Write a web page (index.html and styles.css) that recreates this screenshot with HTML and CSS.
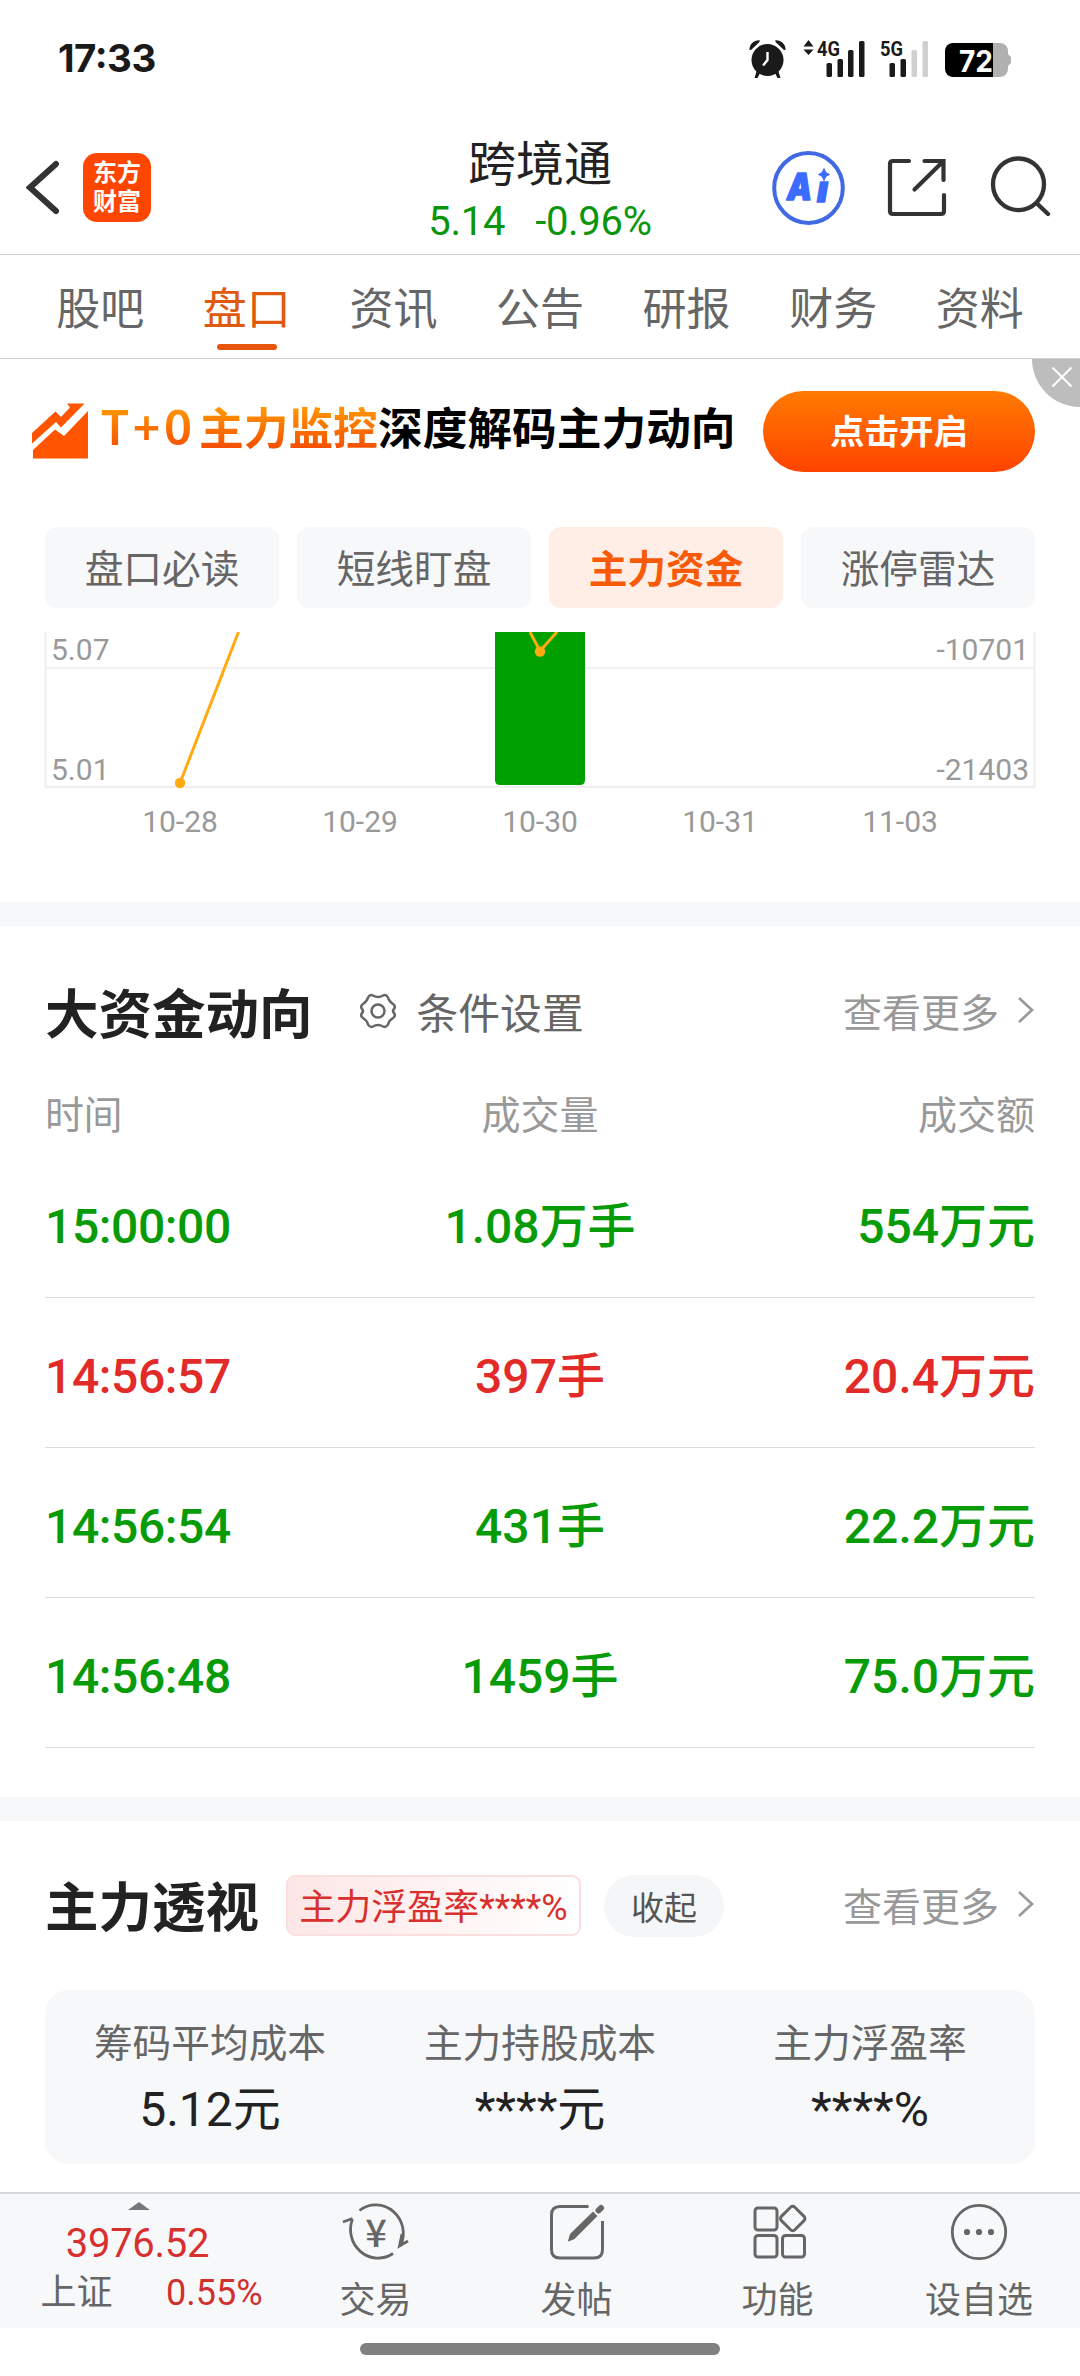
FILE: index.html
```html
<!DOCTYPE html>
<html lang="zh-CN">
<head>
<meta charset="utf-8">
<title>跨境通</title>
<link rel="stylesheet" href="styles.css">
</head>
<body>
<div class="status">
  <span class="clock">17:33</span>
  <svg class="status-icons" width="266" height="44" viewBox="747 37 266 44">
    <g fill="#1a1a1a">
      <circle cx="767.500" cy="61" r="16"/>
      <path d="M749.500 51a9 9 0 0 1 10.500-9.500l-1 2-8 7.500zM785.500 51a9 9 0 0 0-10.500-9.500l1 2 8 7.500z"/>
      <path d="M757 71l-2.500 8h3l3.500-7zM778 71l2.500 8h-3l-3.500-7z"/>
      <path d="M803.500 47.500l5-6.500 5 6.500zM803.500 50.500l5 5.500 5-5.500z"/>
      <rect x="826.500" y="64" width="5.500" height="14" rx="1.500"/>
      <rect x="837.500" y="60" width="5.500" height="18" rx="1.500"/>
      <rect x="848" y="51" width="5.500" height="27" rx="1.500"/>
      <rect x="859" y="42" width="5.500" height="36" rx="1.500"/>
      <rect x="889.500" y="64" width="5.500" height="14" rx="1.500"/>
      <rect x="900.500" y="60" width="5.500" height="18" rx="1.500"/>
    </g>
    <path d="M767.500 53v8l-4.500 5.500" fill="none" stroke="#fff" stroke-width="2.400"/>
    <rect x="911.500" y="51" width="5.500" height="27" rx="1.500" fill="#d0d0d0"/>
    <rect x="922.500" y="42" width="5.500" height="36" rx="1.500" fill="#d0d0d0"/>
    <text class="net" x="817" y="56.500" textLength="23" lengthAdjust="spacingAndGlyphs">4G</text>
    <text class="net" x="880" y="56.500" textLength="23" lengthAdjust="spacingAndGlyphs">5G</text>
    <path d="M992 44h8a8 8 0 0 1 8 8v3l3 3v6l-3 3v3a8 8 0 0 1-8 8h-8z" fill="#b0b0b0"/>
    <path d="M993 44h-40a8 8 0 0 0-8 8v18a8 8 0 0 0 8 8h40z" fill="#000"/>
    <text class="pct" x="959" y="72.500" textLength="34" lengthAdjust="spacingAndGlyphs">72</text>
  </svg>
</div>

<header class="header">
  <div class="head-left">
    <svg width="34" height="56" viewBox="26 160 34 56"><path d="M56 164L30 187.500 56 211" fill="none" stroke="#333" stroke-width="6" stroke-linecap="round"/></svg>
    <div class="logo"><span>东方</span><span>财富</span></div>
  </div>
  <div class="head-mid">
    <div class="name">跨境通</div>
    <div class="quote"><span>5.14</span><span>-0.96%</span></div>
  </div>
  <div class="head-right">
    <svg width="74" height="74" viewBox="772 150 74 74">
      <ellipse cx="808.500" cy="187" rx="34.300" ry="35" fill="none" stroke="#4169e1" stroke-width="4"/>
      <text class="ai" x="787" y="199" textLength="25" lengthAdjust="spacingAndGlyphs">A</text>
      <text class="ai" x="817" y="200.500" textLength="11" lengthAdjust="spacingAndGlyphs">ı</text>
      <path d="M824 167.500q1 5 5.500 6q-4.500 1-5.500 6q-1-5-5.500-6q4.500-1 5.500-6z" fill="#3b6bff" stroke="#3b6bff"/>
    </svg>
    <svg width="62" height="62" viewBox="885 157 62 62" fill="none" stroke="#333" stroke-width="4.200" stroke-linecap="round">
      <path d="M909 161h-16q-3 0-3 3v47q0 3 3 3h48q3 0 3-3v-16M924.500 161h19v19M943 161.500L914.500 189.500"/>
    </svg>
    <svg class="search" width="62" height="66" viewBox="989 155 62 66" fill="none" stroke="#333" stroke-width="4.300" stroke-linecap="round">
      <ellipse cx="1018.500" cy="184.300" rx="25.500" ry="25.800"/><path d="M1037 203.500l11 10.500"/>
    </svg>
  </div>
</header>

<nav class="tabs">
  <span>股吧</span><span class="on">盘口</span><span>资讯</span><span>公告</span><span>研报</span><span>财务</span><span>资料</span>
</nav>

<section class="banner">
  <svg width="58" height="58" viewBox="31 402 58 58" fill="#ff5500">
    <path d="M32 433L55.500 411.500 61 417 70 407.500 67 403.500H84.500L61 427.500 56 422 32 443.500z"/>
    <path d="M33 450L55 429.500 64 436 88 411V458.500H33z"/>
  </svg>
  <p><em><span class="t0">T+0</span>主力监控</em>深度解码主力动向</p>
  <button class="cta">点击开启</button>
  <div class="close"><svg width="22" height="22" viewBox="0 0 22 22"><path d="M1.500 1.500l19 19M20.500 1.500l-19 19" stroke="#fff" stroke-width="2"/></svg></div>
</section>

<div class="chips">
  <span>盘口必读</span><span>短线盯盘</span><span class="on">主力资金</span><span>涨停雷达</span>
</div>

<section class="chart">
  <svg width="1080" height="160" viewBox="0 632 1080 160">
    <path d="M45.500 632V787H1034.500V632" fill="none" stroke="#eee" stroke-width="2"/>
    <path d="M45 668H1035" stroke="#f1f1f1" stroke-width="2"/>
    <path d="M495 632h90v148q0 5-5 5h-80q-5 0-5-5z" fill="#00a000"/>
    <path d="M180 783L238.500 632M530 632l10 19 17-19" fill="none" stroke="#fa1" stroke-width="3"/>
    <circle cx="180" cy="783" r="5.200" fill="#fa1"/><circle cx="540" cy="651.500" r="5.200" fill="#fa1"/>
    <g class="axis">
      <text x="51" y="660">5.07</text><text x="51" y="780">5.01</text>
      <text x="1029" y="660" text-anchor="end">-10701</text><text x="1029" y="780" text-anchor="end">-21403</text>
    </g>
  </svg>
  <div class="dates"><span>10-28</span><span>10-29</span><span>10-30</span><span>10-31</span><span>11-03</span></div>
</section>

<section class="flow">
  <div class="section-head">
    <h2>大资金动向</h2>
    <svg class="gear" width="38" height="38" viewBox="-19 -19 38 38" fill="none" stroke="#666" stroke-width="2.500" stroke-linejoin="round">
      <path d="M-5 -15.500Q0 -12.500 5 -15.500Q8 -17 10 -13.500Q11 -9.500 15 -7Q18 -5 16 -2Q14 0 16 2Q18 5 15 7Q11 9.500 10 13.500Q8 17 5 15.500Q0 12.500 -5 15.500Q-8 17 -10 13.500Q-11 9.500 -15 7Q-18 5 -16 2Q-14 0 -16 -2Q-18 -5 -15 -7Q-11 -9.500 -10 -13.500Q-8 -17 -5 -15.500z"/>
      <circle r="6.500"/>
    </svg>
    <span class="setting">条件设置</span>
    <span class="more">查看更多<svg width="20" height="28" viewBox="0 0 20 28"><path d="M3 2l13 12L3 26" fill="none" stroke="#999" stroke-width="2.600"/></svg></span>
  </div>
  <div class="row th"><span>时间</span><span>成交量</span><span>成交额</span></div>
  <div class="row down"><span>15:00:00</span><span>1.08万手</span><span>554万元</span></div>
  <div class="row up"><span>14:56:57</span><span>397手</span><span>20.4万元</span></div>
  <div class="row down"><span>14:56:54</span><span>431手</span><span>22.2万元</span></div>
  <div class="row down"><span>14:56:48</span><span>1459手</span><span>75.0万元</span></div>
</section>

<section class="insight">
  <div class="section-head">
    <h2>主力透视</h2>
    <span class="tag">主力浮盈率****%</span>
    <span class="fold">收起</span>
    <span class="more">查看更多<svg width="20" height="28" viewBox="0 0 20 28"><path d="M3 2l13 12L3 26" fill="none" stroke="#999" stroke-width="2.600"/></svg></span>
  </div>
  <div class="card">
    <div><span>筹码平均成本</span><b>5.12元</b></div>
    <div><span>主力持股成本</span><b>****元</b></div>
    <div><span>主力浮盈率</span><b>****%</b></div>
  </div>
</section>

<footer class="bar">
  <div class="index">
    <i class="caret"></i>
    <span class="point">3976.52</span>
    <div class="idx-row"><span>上证</span><span class="chg">0.55%</span></div>
  </div>
  <div class="item">
    <svg width="68" height="64" viewBox="342 2200 68 64" fill="none" stroke="#666" stroke-width="2.800">
      <path d="M359.500 2210.500A27.500 28.500 0 0 1 400.500 2246M393 2253.500A27.500 28.500 0 0 1 352.500 2219"/>
      <path d="M343 2222l9.500-3.500M408 2241l-8.500 5 2.500-12"/>
      <text class="yen" x="376" y="2246.500" text-anchor="middle">¥</text>
    </svg>
    <span>交易</span>
  </div>
  <div class="item">
    <svg width="68" height="64" viewBox="543 2200 68 64" fill="none" stroke="#666" stroke-width="3">
      <path d="M588.500 2206.500H560q-8.500 0-8.500 8.500v34.500q0 8.500 8.500 8.500h34q8.500 0 8.500-8.500V2221"/>
      <path d="M568 2241l2-7 23-22.500 4.500 4.500-23 23-6 2.500z" fill="#666" stroke="none"/>
      <path d="M598.500 2210.500l2.500-2.500" stroke-width="6" stroke-linecap="round"/>
    </svg>
    <span>发帖</span>
  </div>
  <div class="item">
    <svg width="68" height="64" viewBox="743 2200 68 64" fill="none" stroke="#666" stroke-width="3">
      <rect x="754" y="2208" width="22" height="22" rx="3"/><rect x="754" y="2235.500" width="22" height="21.500" rx="3"/><rect x="781.500" y="2235.500" width="22" height="21.500" rx="3"/>
      <rect x="782.200" y="2209" width="19" height="19" rx="3" transform="rotate(45 791.700 2218.500)"/>
    </svg>
    <span>功能</span>
  </div>
  <div class="item">
    <svg width="68" height="64" viewBox="945 2200 68 64">
      <circle cx="979" cy="2232" r="26.700" fill="none" stroke="#666" stroke-width="2.800"/>
      <g fill="#666"><circle cx="967" cy="2232" r="3.100"/><circle cx="979" cy="2232" r="3.100"/><circle cx="991" cy="2232" r="3.100"/></g>
    </svg>
    <span>设自选</span>
  </div>
</footer>
<div class="home"><i></i></div>
</body>
</html>
```
FILE: styles.css
```css
* { box-sizing: border-box; margin: 0; padding: 0; }
html, body { width: 1080px; height: 2376px; overflow: hidden; }
body {
  background: #fff; color: #222;
  font-family: Roboto, "Noto Sans CJK SC", sans-serif;
  display: flex; flex-direction: column;
}
svg { display: block; flex: none; }
span, h2, p { white-space: nowrap; }

.status { height: 110px; flex: none; display: flex; justify-content: space-between; padding: 36px 67px 0 58px; }
.clock { font: 700 38.500px/45px Inter, sans-serif; letter-spacing: -0.5px; color: #1a1a1a; font-feature-settings: "case"; }
.net { font: 700 21px Roboto, sans-serif; fill: #1a1a1a; }
.pct { font: 700 30px Inter, sans-serif; fill: #fff; }

.header { height: 145px; flex: none; display: grid; grid-template-columns: 360px 360px 360px; border-bottom: 1px solid #d2d2d2; }
.head-left { display: flex; align-items: center; padding: 11px 0 0 26px; gap: 23px; }
.logo {
  width: 68px; height: 69px; border-radius: 14px; background: #ff4600; color: #fff;
  display: flex; flex-direction: column; align-items: center; justify-content: center;
  font-size: 24px; font-weight: 700; line-height: 29px;
}
.head-mid { display: flex; flex-direction: column; align-items: center; padding-top: 25px; }
.name { font-size: 48px; line-height: 60px; }
.quote { display: flex; gap: 30px; font-size: 40px; line-height: 54px; letter-spacing: -0.3px; color: #0a960a; }
.head-right { display: flex; align-items: center; padding: 11px 0 0 52px; gap: 39px; }
.search { margin-left: 3px; }
.ai { font: italic 900 37px Inter, sans-serif; fill: #3b6bff; stroke: #3b6bff; stroke-width: 1.500px; stroke-linejoin: round; }

.tabs { height: 104px; flex: none; display: flex; padding: 0 27px; border-bottom: 1px solid #d2d2d2; }
.tabs span { flex: 1; text-align: center; font-size: 44px; line-height: 110px; color: #666; }
.tabs .on { color: #df590f; display: flex; flex-direction: column; align-items: center; }
.tabs .on::after { content: ""; width: 60px; height: 6px; border-radius: 3px; background: #e65508; margin-top: -21px; }

.banner { height: 144px; flex: none; position: relative; display: flex; align-items: center; padding: 0 45px 0 31px; }
.banner p { font-size: 44.700px; line-height: 60px; font-weight: 700; color: #000; margin-left: 12px; flex: 1; padding-bottom: 3px; }
.banner em { font-style: normal; display: inline-block; width: 277px; background: linear-gradient(#ff9500 15%, #f54a00 85%); -webkit-background-clip: text; background-clip: text; color: transparent; }
.t0 { font-family: "Noto Sans", sans-serif; font-weight: 600; font-size: 49px; line-height: 50px; display: inline-block; letter-spacing: 3.500px; width: 98px; }
.cta { width: 272px; height: 81px; border: 0; border-radius: 41px; background: linear-gradient(#ff7b00, #ff4300); color: #fff; font: 700 34.500px/74px "Noto Sans CJK SC", sans-serif; padding-bottom: 5px; }
.close { position: absolute; top: 0; right: 0; width: 48px; height: 48px; background: #bdbdbd; border-bottom-left-radius: 48px; padding: 7px 0 0 19px; }

.chips { flex: none; display: grid; grid-template-columns: repeat(4, 1fr); gap: 18px; padding: 24px 45px; }
.chips span { height: 81px; border-radius: 12px; background: #f7f8fa; color: #666; text-align: center; font-size: 38.700px; line-height: 86px; }
.chips .on { background: #ffeee6; color: #f95a08; font-weight: 700; }

.chart { height: 270px; flex: none; }
.axis { font: 30px Roboto, sans-serif; fill: #999; }
.dates { display: flex; padding: 12px 90px 0; }
.dates span { flex: 1; text-align: center; font-size: 30px; line-height: 36px; color: #999; }

.flow, .insight { border-top: 24px solid #f7f8fa; flex: none; padding: 0 45px; }
.flow { height: 895px; }
.section-head { display: flex; align-items: center; height: 174px; }
.section-head h2 { font-size: 53.500px; line-height: 60px; font-weight: 700; padding-top: 5px; }
.gear { margin-left: 46px; margin-top: -4px; }
.setting { margin-left: 20px; font-size: 41.800px; color: #666; margin-top: -4px; }
.more { margin: -7px -1px 0 auto; display: flex; align-items: center; gap: 17px; font-size: 39px; color: #999; }
.row { display: grid; grid-template-columns: 1fr 1fr 1fr; height: 150px; line-height: 157px; font-size: 48px; font-weight: 500; border-bottom: 1px solid #dedede; }
.row span:first-child { letter-spacing: -0.400px; }
.row span:nth-child(2) { text-align: center; }
.row span:nth-child(3) { text-align: right; }
.row.th { height: 48px; line-height: 32px; font-size: 39px; font-weight: 400; color: #999; border: 0; }
.down { color: #089b08; }
.up { color: #e22b29; }

.insight { height: 395px; }
.insight .section-head { height: 169px; }
.insight .more { margin-top: -4px; }
.insight h2 { padding-top: 7px; }
.tag { margin-left: 27px; width: 295px; height: 61px; border: 2px solid #fbdfdf; border-radius: 9px; background: linear-gradient(90deg, #fde6e6, #fff); color: #d8302e; font-size: 36px; line-height: 62px; text-align: center; }
.fold { margin-left: 23px; width: 120px; height: 62px; border-radius: 31px; background: #f5f6f8; color: #555; text-align: center; font-size: 33px; line-height: 67px; }
.card { height: 174px; border-radius: 24px; background: #f7f8fa; display: grid; grid-template-columns: repeat(3, 1fr); }
.card div { display: flex; flex-direction: column; align-items: center; padding-top: 26px; }
.card span { font-size: 38.700px; line-height: 56px; color: #666; }
.card b { font-size: 48px; line-height: 60px; font-weight: 400; margin-top: 8px; }

.bar { height: 136px; flex: none; border-top: 2px solid #d6d8db; background: #f7f8fa; display: grid; grid-template-columns: 275px 201px 201px 201px 202px; color: #666; }
.index { display: flex; flex-direction: column; align-items: center; }
.caret { margin: 8px 0 0 2px; border: 11px solid transparent; border-top: 0; border-bottom: 8px solid #76777a; }
.point { font-size: 40px; line-height: 44px; margin-top: 12px; color: #d8302e; letter-spacing: -0.300px; }
.idx-row { width: 222px; display: flex; justify-content: space-between; font-size: 36px; line-height: 50px; margin: 2px 0 0 28px; }
.chg { color: #d0302e; }
.item { display: flex; flex-direction: column; align-items: center; padding-top: 6px; }
.item span { font-size: 36px; line-height: 50px; margin-top: 12px; }
.yen { font: 500 38px "Noto Sans CJK SC", sans-serif; fill: #666; stroke: none; }
.home { flex: 1; display: flex; justify-content: center; padding-top: 15px; }
.home i { width: 360px; height: 12px; border-radius: 6px; background: #808080; }
```
